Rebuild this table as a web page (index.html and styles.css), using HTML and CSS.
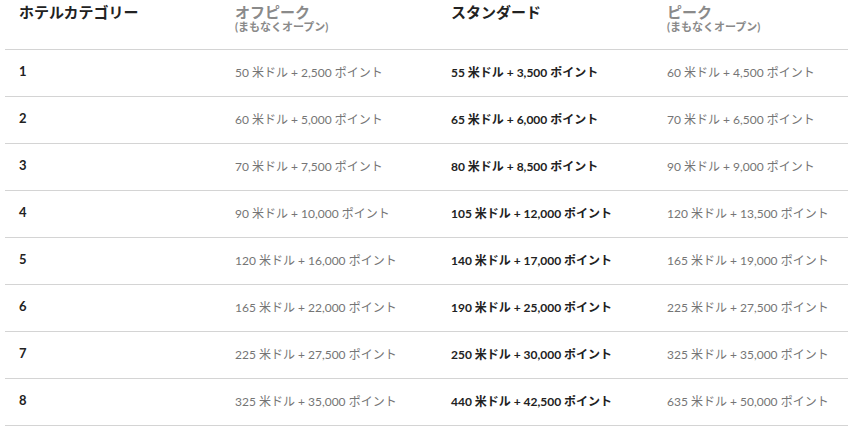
FILE: index.html
```html
<!DOCTYPE html>
<html lang="ja">
<head>
<meta charset="utf-8">
<link rel="stylesheet" href="styles.css">
</head>
<body>
<div class="table">
  <div class="row head">
    <div class="cell"><div class="h dark">ホテルカテゴリー</div></div>
    <div class="cell"><div class="h">オフピーク</div><div class="sub">(まもなくオープン)</div></div>
    <div class="cell"><div class="h dark">スタンダード</div></div>
    <div class="cell"><div class="h">ピーク</div><div class="sub">(まもなくオープン)</div></div>
  </div>
  <div class="row"><div class="cell cat">1</div><div class="cell g">50 米ドル + 2,500 ポイント</div><div class="cell b">55 米ドル + 3,500 ポイント</div><div class="cell g">60 米ドル + 4,500 ポイント</div></div>
  <div class="row"><div class="cell cat">2</div><div class="cell g">60 米ドル + 5,000 ポイント</div><div class="cell b">65 米ドル + 6,000 ポイント</div><div class="cell g">70 米ドル + 6,500 ポイント</div></div>
  <div class="row"><div class="cell cat">3</div><div class="cell g">70 米ドル + 7,500 ポイント</div><div class="cell b">80 米ドル + 8,500 ポイント</div><div class="cell g">90 米ドル + 9,000 ポイント</div></div>
  <div class="row"><div class="cell cat">4</div><div class="cell g">90 米ドル + 10,000 ポイント</div><div class="cell b">105 米ドル + 12,000 ポイント</div><div class="cell g">120 米ドル + 13,500 ポイント</div></div>
  <div class="row"><div class="cell cat">5</div><div class="cell g">120 米ドル + 16,000 ポイント</div><div class="cell b">140 米ドル + 17,000 ポイント</div><div class="cell g">165 米ドル + 19,000 ポイント</div></div>
  <div class="row"><div class="cell cat">6</div><div class="cell g">165 米ドル + 22,000 ポイント</div><div class="cell b">190 米ドル + 25,000 ポイント</div><div class="cell g">225 米ドル + 27,500 ポイント</div></div>
  <div class="row"><div class="cell cat">7</div><div class="cell g">225 米ドル + 27,500 ポイント</div><div class="cell b">250 米ドル + 30,000 ポイント</div><div class="cell g">325 米ドル + 35,000 ポイント</div></div>
  <div class="row"><div class="cell cat">8</div><div class="cell g">325 米ドル + 35,000 ポイント</div><div class="cell b">440 米ドル + 42,500 ポイント</div><div class="cell g">635 米ドル + 50,000 ポイント</div></div>
</div>
</body>
</html>
```
FILE: styles.css
```css
html, body {
  margin: 0;
  padding: 0;
  background: #fff;
}
body {
  font-family: Lato, "Noto Sans CJK JP", sans-serif;
  color: #222;
  overflow: hidden;
}
.table {
  margin-left: 5px;
}
.row {
  display: grid;
  grid-template-columns: 216px 216px 216px 1fr;
  border-bottom: 1px solid #d4d4d4;
  height: 46px;
  align-items: center;
}
.row.head {
  height: 49px;
  align-items: start;
}
.cell {
  padding-left: 14px;
  padding-bottom: 4px;
  font-size: 12px;
  white-space: nowrap;
}
.head .cell {
  padding-top: 3px;
  padding-bottom: 0;
}
.h {
  font-size: 15px;
  font-weight: 700;
  line-height: 18px;
  color: #8a8a8a;
}
.h.dark {
  color: #222;
}
.sub {
  font-size: 11px;
  font-weight: 700;
  line-height: 12px;
  color: #8a8a8a;
}
.cat {
  font-weight: 700;
  font-size: 13px;
  color: #222;
}
.g {
  color: #757575;
}
.b {
  font-weight: 700;
  color: #222;
}
```
